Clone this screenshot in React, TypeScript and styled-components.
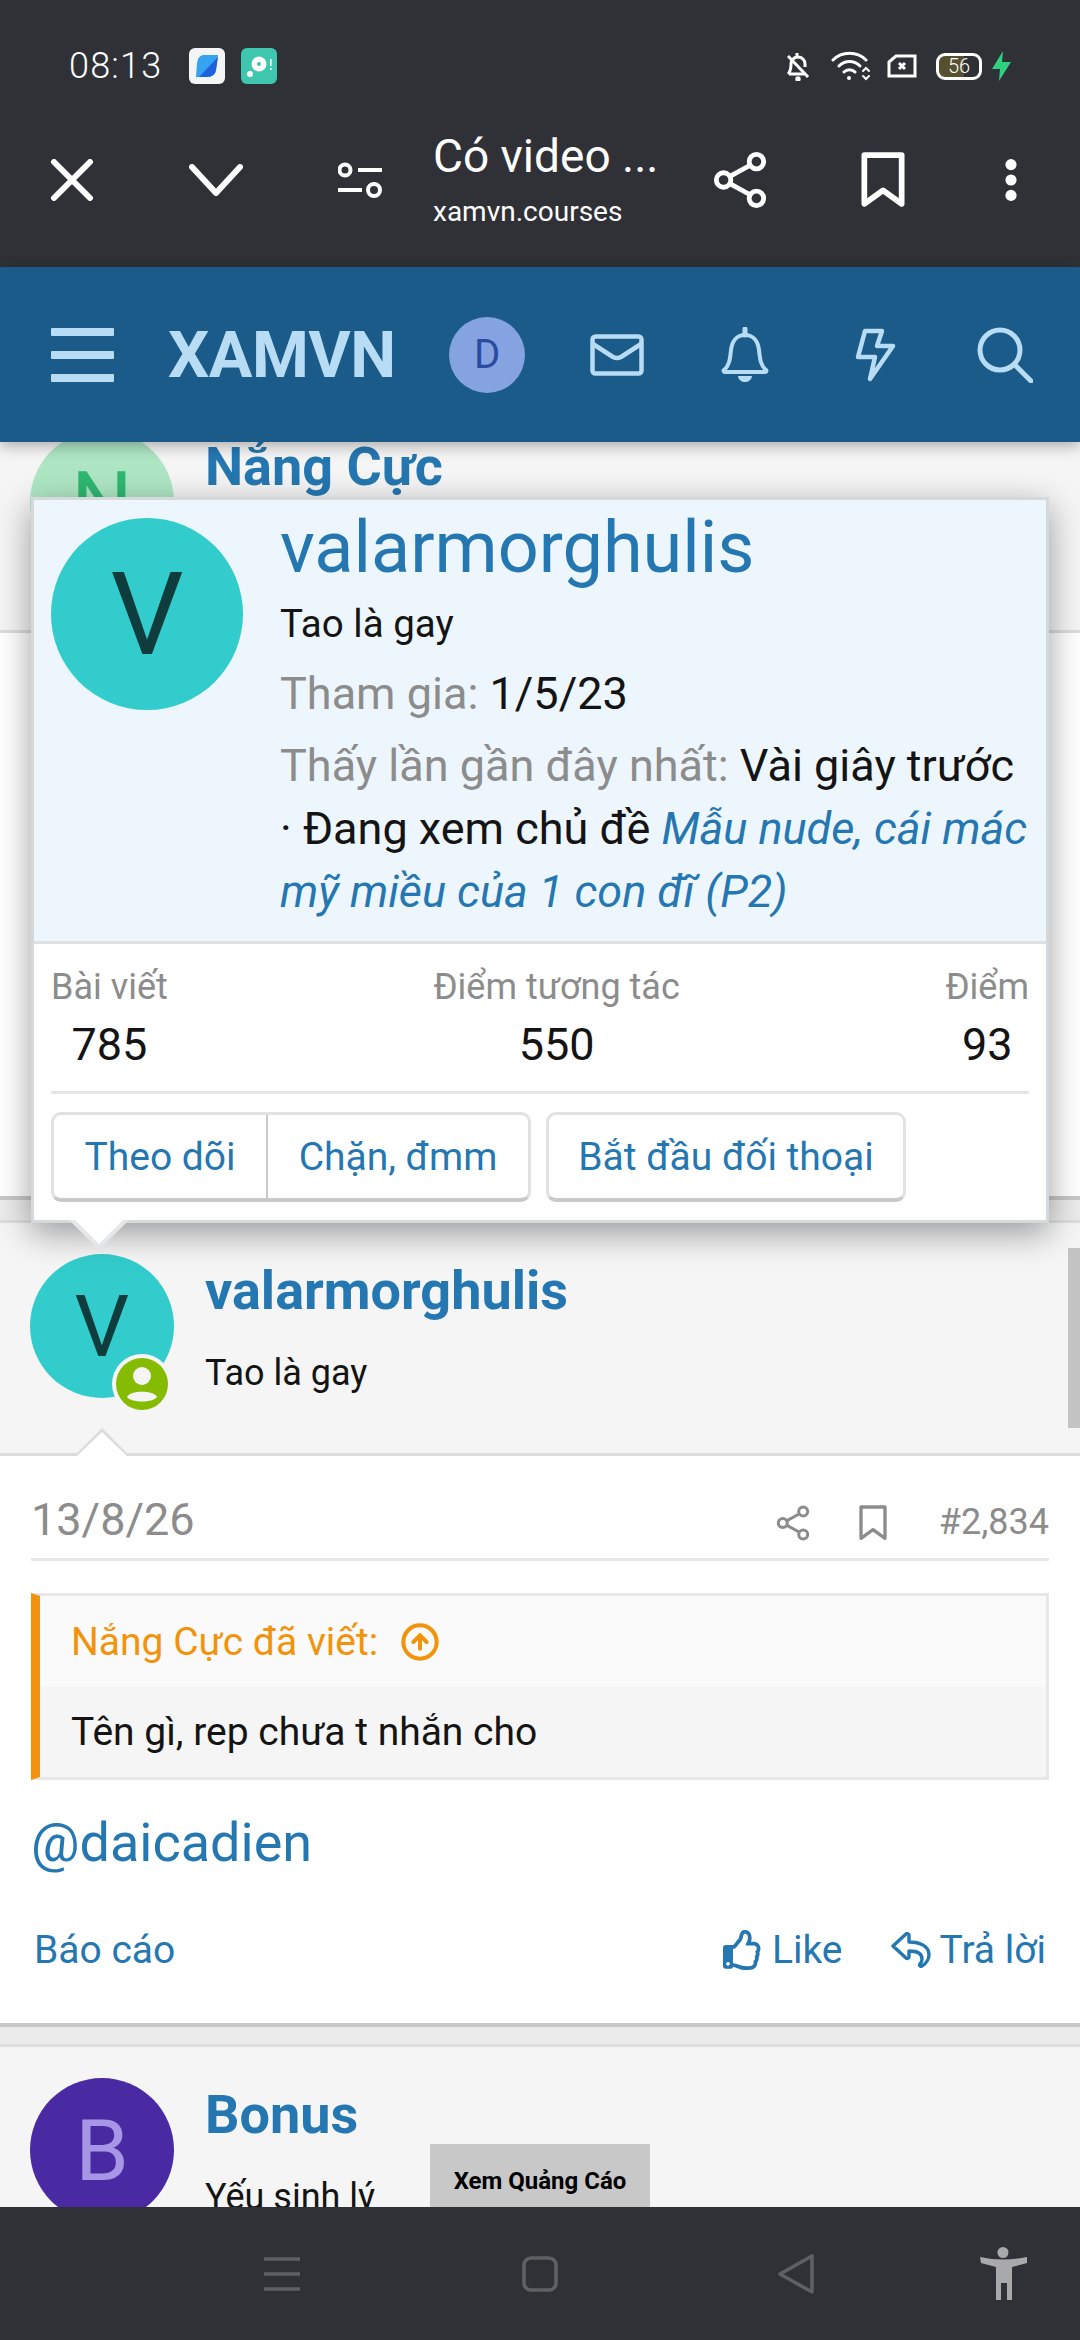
import { CircleArrowUp } from 'lucide-react';
import { FaRegThumbsUp } from 'react-icons/fa';
import styled, { createGlobalStyle } from 'styled-components';

const BLUE = '#2577b1';
const CHROME = '#303136';

const GlobalStyle = createGlobalStyle`
  html, body { margin: 0; padding: 0; background: #fff; }
  * { box-sizing: border-box; }
  body { font-family: Roboto, "Noto Sans", sans-serif; }
`;

const Screen = styled.div`
  width: 1080px;
  height: 2340px;
  display: flex;
  flex-direction: column;
  overflow: hidden;
  position: relative;
`;

// status bar + custom tab toolbar
const TopChrome = styled.div`
  height: 267px;
  background: ${CHROME};
  color: #fff;
  display: flex;
  flex-direction: column;
  flex: none;
`;

const StatusBar = styled.div`
  height: 132px;
  display: flex;
  align-items: center;
  padding: 0 69px 0 69px;
`;

const Clock = styled.span`
  font-size: 36px;
  font-weight: 300;
  letter-spacing: 1.2px;
  width: 120px;
`;

const AppBadge = styled.div<{ $bg: string }>`
  width: 36px;
  height: 36px;
  border-radius: 6px;
  background: ${({ $bg }) => $bg};
  display: flex;
  align-items: center;
  justify-content: center;
  margin-right: 16px;
`;

const StatusIcons = styled.div`
  margin-left: auto;
  display: flex;
  align-items: center;
`;

const BatteryShell = styled.div`
  width: 46px;
  height: 27px;
  border: 3px solid #fff;
  border-radius: 9px;
  font-size: 20px;
  font-weight: 300;
  display: flex;
  align-items: center;
  justify-content: center;
  background: linear-gradient(90deg, #57502f 0 62%, transparent 62%);
  margin-left: 19px;
`;

const Toolbar = styled.div`
  height: 135px;
  padding-bottom: 40px;
  display: flex;
  align-items: center;
  position: relative;
`;

const ToolSlot = styled.div<{ $w: number; $pl?: number }>`
  width: ${({ $w }) => $w}px;
  padding-left: ${({ $pl }) => $pl ?? 0}px;
  display: flex;
  align-items: center;
  flex: none;
`;

const TabTitle = styled.div`
  display: flex;
  flex-direction: column;
  width: 278px;
  flex: none;
  margin-top: 2px;
`;

const TitleLine = styled.span`
  font-size: 46px;
  line-height: 54px;
  font-weight: 400;
`;

const UrlLine = styled.span`
  font-size: 28px;
  line-height: 40px;
  margin-top: 9px;
`;

const SiteHeader = styled.header`
  height: 175px;
  flex: none;
  background: #1a5b89;
  color: #b9dcf5;
  display: flex;
  align-items: center;
  padding-left: 51px;
  position: relative;
  z-index: 2;
  box-shadow: 0 4px 14px rgba(0, 0, 0, 0.3);
`;

const Logo = styled.span`
  font-size: 65px;
  font-weight: 700;
  margin-left: 54px;
  width: 281px;
  letter-spacing: -0.5px;
`;

const UserDot = styled.div`
  width: 76px;
  height: 76px;
  border-radius: 50%;
  background: #85a3e0;
  color: #2b4ba3;
  font-size: 40px;
  display: flex;
  align-items: center;
  justify-content: center;
`;

const HeaderIcon = styled.div<{ $ml: number }>`
  margin-left: ${({ $ml }) => $ml}px;
  display: flex;
`;

const Viewport = styled.main`
  flex: 1;
  min-height: 0;
  position: relative;
  overflow: hidden;
  background: #ebebeb;
`;

const Thread = styled.div`
  margin-top: -43px;
  display: flex;
  flex-direction: column;
`;

const UserBlock = styled.div<{ $h: number }>`
  height: ${({ $h }) => $h}px;
  flex: none;
  background: #f5f5f5;
  border-bottom: 3px solid #dcdcdc;
  padding: 31px 0 0 30px;
  display: flex;
  position: relative;
`;

const UserTail = styled.div`
  position: absolute;
  left: 74px;
  bottom: -3px;
  width: 0;
  height: 0;
  border-left: 28px solid transparent;
  border-right: 28px solid transparent;
  border-bottom: 28px solid #dcdcdc;

  &::after {
    content: '';
    position: absolute;
    left: -25px;
    top: 4px;
    border-left: 25px solid transparent;
    border-right: 25px solid transparent;
    border-bottom: 24px solid #fff;
  }
`;

const Avatar = styled.div<{ $size: number; $bg: string; $fg: string }>`
  width: ${({ $size }) => $size}px;
  height: ${({ $size }) => $size}px;
  border-radius: 50%;
  flex: none;
  background: ${({ $bg }) => $bg};
  color: ${({ $fg }) => $fg};
  font-size: ${({ $size }) => Math.round($size * 0.6)}px;
  display: flex;
  align-items: center;
  justify-content: center;
  position: relative;
`;

const OnlineBadge = styled.div`
  position: absolute;
  left: 82px;
  top: 100px;
  width: 60px;
  height: 60px;
  border-radius: 50%;
  background: #f5f5f5;
  display: flex;
  align-items: center;
  justify-content: center;
`;

const UserInfo = styled.div`
  margin-left: 31px;
  display: flex;
  flex-direction: column;
`;

const UserName = styled.span`
  font-size: 54px;
  line-height: 56px;
  font-weight: 700;
  color: ${BLUE};
  margin-top: 9px;
`;

const UserTitle = styled.span`
  font-size: 36px;
  line-height: 40px;
  color: #141414;
  margin-top: 34px;
`;

const PostBody = styled.div<{ $h: number }>`
  height: ${({ $h }) => $h}px;
  flex: none;
  background: #fff;
  border-bottom: 4px solid #c8c8c8;
  padding: 0 31px;
  display: flex;
  flex-direction: column;
`;

const PostGap = styled.div<{ $h: number }>`
  height: ${({ $h }) => $h}px;
  flex: none;
  background: #ebebeb;
  border-bottom: 3px solid #dedede;
`;

const PostMeta = styled.div`
  height: 105px;
  flex: none;
  border-bottom: 3px solid #e7e7e7;
  display: flex;
  align-items: center;
  color: #8c8c8c;
  padding-top: 24px;
`;

const PostDate = styled.span`
  font-size: 45px;
  font-weight: 400;
`;

const PostNumber = styled.span`
  font-size: 36px;
  margin-left: 52px;
  margin-top: 6px;
`;

const MetaIcons = styled.div`
  margin-left: auto;
  display: flex;
  align-items: center;
  gap: 48px;
  margin-top: 8px;
`;

const Quote = styled.blockquote`
  margin: 32px 0 0;
  height: 187px;
  flex: none;
  border: 3px solid #e7e7e7;
  border-left: 9px solid #f2930d;
  display: flex;
  flex-direction: column;
`;

const QuoteHead = styled.div`
  height: 91px;
  background: #fafafa;
  color: #f2930d;
  font-size: 39px;
  padding-left: 31px;
  display: flex;
  align-items: center;
  gap: 22px;
`;

const QuoteText = styled.div`
  flex: 1;
  background: #f5f5f5;
  color: #141414;
  font-size: 39px;
  padding-left: 31px;
  display: flex;
  align-items: center;
`;

const Mention = styled.div`
  font-size: 54px;
  line-height: 64px;
  color: ${BLUE};
  margin-top: 31px;
`;

const PostActions = styled.div`
  display: flex;
  align-items: center;
  margin-top: 53px;
  padding: 0 3px;
  color: ${BLUE};
  font-size: 39px;
  line-height: 44px;
`;

const ActionLink = styled.span<{ $ml?: string }>`
  display: flex;
  align-items: center;
  gap: 9px;
  margin-left: ${({ $ml }) => $ml ?? '0'};
`;

const AdBox = styled.div`
  position: absolute;
  left: 430px;
  top: 1702px;
  width: 220px;
  height: 90px;
  background: #c8c8c8;
  color: #000;
  font-size: 24px;
  font-weight: 700;
  text-align: center;
  padding-top: 21px;
  line-height: 32px;
`;

const ScrollThumb = styled.div`
  position: absolute;
  right: 0;
  top: 806px;
  width: 12px;
  height: 180px;
  background: #c4c4c4;
`;

// member tooltip card
const MemberCard = styled.div`
  position: absolute;
  left: 31px;
  top: 55px;
  width: 1018px;
  height: 726px;
  background: #fff;
  border: 3px solid #d6d9dc;
  box-shadow: 0 10px 32px rgba(0, 0, 0, 0.38);
  display: flex;
  flex-direction: column;
`;

const CardTail = styled.div`
  position: absolute;
  left: 35px;
  bottom: -30px;
  width: 0;
  height: 0;
  border-left: 30px solid transparent;
  border-right: 30px solid transparent;
  border-top: 30px solid #e4e6e8;

  &::after {
    content: '';
    position: absolute;
    left: -27px;
    top: -33px;
    border-left: 27px solid transparent;
    border-right: 27px solid transparent;
    border-top: 27px solid #fff;
  }
`;

const CardTop = styled.div`
  height: 444px;
  flex: none;
  background: #edf6fd;
  border-bottom: 3px solid #dde1e4;
  padding: 18px 0 0 17px;
  display: flex;
`;

const CardInfo = styled.div`
  margin-left: 37px;
  display: flex;
  flex-direction: column;
  width: 755px;
`;

const CardName = styled.div`
  font-size: 72px;
  line-height: 70px;
  color: ${BLUE};
  margin-top: -5px;
`;

const CardTagline = styled.div`
  font-size: 38.5px;
  line-height: 44px;
  color: #141414;
  margin-top: 19px;
`;

const CardLine = styled.div<{ $mt: number }>`
  font-size: 45px;
  line-height: 63px;
  color: #141414;
  margin-top: ${({ $mt }) => $mt}px;
`;

const Muted = styled.span`
  color: #8c8c8c;
`;

const ThreadLink = styled.em`
  color: ${BLUE};
  font-style: italic;
`;

const CardBottom = styled.div`
  flex: 1;
  padding: 0 17px;
  display: flex;
  flex-direction: column;
`;

const StatsRow = styled.div`
  height: 150px;
  flex: none;
  display: flex;
  justify-content: space-between;
  border-bottom: 3px solid #e4e4e4;
  padding-top: 23px;
`;

const Stat = styled.div`
  display: flex;
  flex-direction: column;
  align-items: center;
`;

const StatLabel = styled.span`
  font-size: 36px;
  line-height: 40px;
  color: #8c8c8c;
`;

const StatValue = styled.span`
  font-size: 45px;
  line-height: 50px;
  color: #141414;
  margin-top: 13px;
`;

const ButtonRow = styled.div`
  display: flex;
  gap: 15px;
  margin-top: 18px;
`;

const ButtonGroup = styled.div`
  display: flex;
  height: 90px;
  background: #fff;
  border: 3px solid #e2e2e2;
  border-bottom: 4px solid #c9c9c9;
  border-radius: 10px;
  overflow: hidden;
`;

const CardButton = styled.span<{ $w: number; $split?: boolean }>`
  width: ${({ $w }) => $w}px;
  font-size: 39px;
  color: ${BLUE};
  display: flex;
  align-items: center;
  justify-content: center;
  border-right: ${({ $split }) => ($split ? '2px solid #c9c9c9' : 'none')};
`;

const BottomNav = styled.nav`
  height: 133px;
  flex: none;
  background: ${CHROME};
  position: relative;
  z-index: 2;
  display: flex;
  align-items: center;
  padding-left: 264px;
`;

const NavSlot = styled.div<{ $ml: number }>`
  margin-left: ${({ $ml }) => $ml}px;
  display: flex;
`;

const ShareGlyph = ({ size, color, sw }: { size: number; color: string; sw: number }) => (
  <svg width={size} height={size} viewBox="0 0 56 60" fill="none" stroke={color} strokeWidth={sw}>
    <circle cx="45" cy="11" r="7.5" />
    <circle cx="11" cy="30" r="7.5" />
    <circle cx="45" cy="49" r="7.5" />
    <path d="M18 26 38 15M18 34l20 11" />
  </svg>
);

const BookmarkGlyph = ({ w, h, color, sw }: { w: number; h: number; color: string; sw: number }) => (
  <svg width={w} height={h} viewBox="0 0 42 54" fill="none" stroke={color} strokeWidth={sw} strokeLinejoin="round">
    <path d="M3 3h36v47L21 37 3 50z" />
  </svg>
);

const HeaderColor = '#b9dcf5';

export default function App() {
  return (
    <Screen>
      <GlobalStyle />
      <TopChrome>
        <StatusBar>
          <Clock>08:13</Clock>
          <AppBadge $bg="#f4f5f7">
            <svg width="28" height="28" viewBox="0 0 28 28">
              <path d="M10 3h15l-2 15q-1 7-9 7H3l1-14q1-7 6-8z" fill="#36a3f2" />
              <path d="M25 5l-2 13q-1 7-9 7H6z" fill="#1f62e0" />
            </svg>
          </AppBadge>
          <AppBadge $bg="#3fc6ae">
            <svg width="30" height="30" viewBox="0 0 30 30" fill="#fff">
              <circle cx="15" cy="13" r="7.5" />
              <circle cx="15" cy="13" r="2" fill="#3fc6ae" />
              <circle cx="6" cy="23" r="3" />
              <rect x="26" y="8" width="1.6" height="7" />
              <rect x="26" y="17" width="1.6" height="2" />
            </svg>
          </AppBadge>
          <StatusIcons>
            <svg width="26" height="30" viewBox="0 0 26 30" fill="none" stroke="#fff" strokeWidth="3">
              <path d="M3 23c3-3 3-6 3-10 0-4 3-7 7-7s7 3 7 7v3M4 23h15M12 2v3" />
              <path d="M3 5l20 21" />
              <circle cx="13" cy="28" r="1.2" fill="#fff" />
            </svg>
            <svg width="40" height="30" viewBox="0 0 40 30" fill="none" stroke="#fff" strokeWidth="3" style={{ marginLeft: 20 }} strokeLinecap="round">
              <path d="M2 9c9-9 24-9 33 0M8 15c6-6 15-6 21 0M13 21c3-3 8-3 11 0" />
              <circle cx="18" cy="27" r="2" fill="#fff" stroke="none" />
              <path d="M32 20l3-3 3 3M32 25l3 3 3-3" strokeWidth="2" />
            </svg>
            <svg width="30" height="24" viewBox="0 0 30 24" fill="none" stroke="#fff" strokeWidth="3" style={{ marginLeft: 16 }}>
              <path d="M9 2h19v20H2V8z" />
              <path d="M12 9l6 6M18 9l-6 6" />
            </svg>
            <BatteryShell>56</BatteryShell>
            <svg width="19" height="30" viewBox="0 0 19 30" fill="#2fd07f" style={{ marginLeft: 10 }}>
              <path d="M11 0 0 18h8l-1 12L19 11h-9z" />
            </svg>
          </StatusIcons>
        </StatusBar>
        <Toolbar>
          <ToolSlot $w={189} $pl={50}>
            <svg width="44" height="42" viewBox="0 0 44 42" stroke="#fff" strokeWidth="6" strokeLinecap="round">
              <path d="M4 3l36 36M40 3 4 39" />
            </svg>
          </ToolSlot>
          <ToolSlot $w={149}>
            <svg width="54" height="32" viewBox="0 0 54 32" fill="none" stroke="#fff" strokeWidth="6" strokeLinecap="round" strokeLinejoin="round">
              <path d="M3 3l24 26L51 3" />
            </svg>
          </ToolSlot>
          <ToolSlot $w={95}>
            <svg width="44" height="36" viewBox="0 0 44 36" fill="none" stroke="#fff" strokeWidth="4">
              <circle cx="7" cy="8" r="5.5" />
              <path d="M20 8h24M0 28h24" />
              <circle cx="36" cy="28" r="6" />
            </svg>
          </ToolSlot>
          <TabTitle>
            <TitleLine>Có video ...</TitleLine>
            <UrlLine>xamvn.courses</UrlLine>
          </TabTitle>
          <ToolSlot $w={150}>
            <ShareGlyph size={58} color="#fff" sw={5} />
          </ToolSlot>
          <ToolSlot $w={144}>
            <BookmarkGlyph w={44} h={56} color="#fff" sw={5.5} />
          </ToolSlot>
          <ToolSlot $w={12}>
            <svg width="14" height="50" viewBox="0 0 14 50" fill="#fff">
              <circle cx="7" cy="7" r="6.5" />
              <circle cx="7" cy="25" r="6.5" />
              <circle cx="7" cy="43" r="6.5" />
            </svg>
          </ToolSlot>
        </Toolbar>
      </TopChrome>

      <SiteHeader>
        <svg width="63" height="54" viewBox="0 0 63 54" fill={HeaderColor}>
          <rect width="63" height="8" y="0" rx="1" />
          <rect width="63" height="8" y="23" rx="1" />
          <rect width="63" height="8" y="46" rx="1" />
        </svg>
        <Logo>XAMVN</Logo>
        <UserDot>D</UserDot>
        <HeaderIcon $ml={65}>
          <svg width="54" height="42" viewBox="0 0 54 42" fill="none" stroke={HeaderColor} strokeWidth="4.5" strokeLinejoin="round">
            <rect x="2.5" y="2.5" width="49" height="37" rx="3" />
            <path d="M3 10l20 13q4 2 8 0L51 10" />
          </svg>
        </HeaderIcon>
        <HeaderIcon $ml={77}>
          <svg width="48" height="56" viewBox="0 0 48 56" fill="none" stroke={HeaderColor} strokeWidth="4" strokeLinejoin="round">
            <path d="M3 43c5-4 6-10 7-20 1-9 6-15 14-15s13 6 14 15c1 10 2 16 7 20 1 1 0 2-1 2H4c-1 0-2-1-1-2z" />
            <path d="M24 2v6" strokeWidth="5" strokeLinecap="round" />
            <path d="M17 49c1 8 13 8 14 0z" fill={HeaderColor} stroke="none" />
          </svg>
        </HeaderIcon>
        <HeaderIcon $ml={85}>
          <svg width="42" height="56" viewBox="0 0 42 56" fill="none" stroke={HeaderColor} strokeWidth="4.5" strokeLinejoin="round">
            <path d="M11 4h17l-5 15h16L16 52l5-22H4z" />
          </svg>
        </HeaderIcon>
        <HeaderIcon $ml={81}>
          <svg width="56" height="56" viewBox="0 0 56 56" fill="none" stroke={HeaderColor} strokeWidth="5" strokeLinecap="round">
            <circle cx="23" cy="23" r="20" />
            <path d="M38 38l16 16" />
          </svg>
        </HeaderIcon>
      </SiteHeader>

      <Viewport>
        <Thread>
          <UserBlock $h={234}>
            <Avatar $size={144} $bg="#aee6c4" $fg="#2eb872">N</Avatar>
            <UserInfo>
              <UserName>Nắng Cực</UserName>
            </UserInfo>
          </UserBlock>
          <PostBody $h={567} />
          <PostGap $h={23} />
          <UserBlock $h={233}>
            <Avatar $size={144} $bg="#33cccc" $fg="#0f3d3d">
              V
              <OnlineBadge>
                <svg width="52" height="52" viewBox="0 0 52 52">
                  <circle cx="26" cy="26" r="26" fill="#85bb00" />
                  <circle cx="26" cy="18" r="9" fill="#f5f5f5" />
                  <path d="M11 39c3-7 27-7 30 0-4 6-26 6-30 0z" fill="#f5f5f5" />
                </svg>
              </OnlineBadge>
            </Avatar>
            <UserInfo>
              <UserName>valarmorghulis</UserName>
              <UserTitle>Tao là gay</UserTitle>
            </UserInfo>
            <UserTail />
          </UserBlock>
          <PostBody $h={571}>
            <PostMeta>
              <PostDate>13/8/26</PostDate>
              <MetaIcons>
                <ShareGlyph size={36} color="#8c8c8c" sw={5} />
                <BookmarkGlyph w={28} h={36} color="#8c8c8c" sw={5} />
              </MetaIcons>
              <PostNumber>#2,834</PostNumber>
            </PostMeta>
            <Quote>
              <QuoteHead>
                Nắng Cực đã viết:
                <CircleArrowUp size={40} strokeWidth={2.4} />
              </QuoteHead>
              <QuoteText>Tên gì, rep chưa t nhắn cho</QuoteText>
            </Quote>
            <Mention>@daicadien</Mention>
            <PostActions>
              <span>Báo cáo</span>
              <ActionLink $ml="auto">
                <FaRegThumbsUp size={40} />
                Like
              </ActionLink>
              <ActionLink $ml="48px">
                <svg width="40" height="36" viewBox="0 0 40 36" fill="none" stroke={BLUE} strokeWidth="3.4" strokeLinejoin="round">
                  <path d="M15 2 2 14l13 12c1 1 3 0 3-1v-6c8 0 13 2 13 8 0 2-1 4-2 5-1 1 0 3 2 2 5-3 7-8 7-11 0-9-9-13-20-13V3c0-1-2-2-3-1z" />
                </svg>
                Trả lời
              </ActionLink>
            </PostActions>
          </PostBody>
          <PostGap $h={20} />
          <UserBlock $h={300}>
            <Avatar $size={144} $bg="#4a2aa3" $fg="#a796e6">B</Avatar>
            <UserInfo>
              <UserName>Bonus</UserName>
              <UserTitle>Yếu sinh lý</UserTitle>
            </UserInfo>
          </UserBlock>
        </Thread>
        <AdBox>Xem Quảng Cáo</AdBox>
        <ScrollThumb />
        <MemberCard>
          <CardTop>
            <Avatar $size={192} $bg="#33cccc" $fg="#0f3d3d">V</Avatar>
            <CardInfo>
              <CardName>valarmorghulis</CardName>
              <CardTagline>Tao là gay</CardTagline>
              <CardLine $mt={16}>
                <Muted>Tham gia:</Muted> 1/5/23
              </CardLine>
              <CardLine $mt={9}>
                <Muted>Thấy lần gần đây nhất:</Muted> Vài giây trước · Đang xem chủ đề{' '}
                <ThreadLink>Mẫu nude, cái mác mỹ miều của 1 con đĩ (P2)</ThreadLink>
              </CardLine>
            </CardInfo>
          </CardTop>
          <CardBottom>
            <StatsRow>
              <Stat>
                <StatLabel>Bài viết</StatLabel>
                <StatValue>785</StatValue>
              </Stat>
              <Stat>
                <StatLabel>Điểm tương tác</StatLabel>
                <StatValue>550</StatValue>
              </Stat>
              <Stat>
                <StatLabel>Điểm</StatLabel>
                <StatValue>93</StatValue>
              </Stat>
            </StatsRow>
            <ButtonRow>
              <ButtonGroup>
                <CardButton $w={214} $split>Theo dõi</CardButton>
                <CardButton $w={260}>Chặn, đmm</CardButton>
              </ButtonGroup>
              <ButtonGroup>
                <CardButton $w={354}>Bắt đầu đối thoại</CardButton>
              </ButtonGroup>
            </ButtonRow>
          </CardBottom>
          <CardTail />
        </MemberCard>
      </Viewport>

      <BottomNav>
        <svg width="36" height="34" viewBox="0 0 36 34" stroke="#5f6064" strokeWidth="3.5">
          <path d="M0 2h36M0 17h36M0 32h36" />
        </svg>
        <NavSlot $ml={222}>
          <svg width="36" height="36" viewBox="0 0 36 36" fill="none" stroke="#5f6064" strokeWidth="3.5">
            <rect x="2" y="2" width="32" height="32" rx="7" />
          </svg>
        </NavSlot>
        <NavSlot $ml={220}>
          <svg width="36" height="40" viewBox="0 0 36 40" fill="none" stroke="#5f6064" strokeWidth="3.5" strokeLinejoin="round">
            <path d="M34 2v36L2 20z" />
          </svg>
        </NavSlot>
        <NavSlot $ml={166}>
          <svg width="47" height="54" viewBox="0 0 47 54" fill="#a9a9ab">
            <circle cx="23" cy="5.5" r="5.5" />
            <path d="M0 10Q23 15 47 10L47 16 32 20V53H27V36H21V53H16V20L1 16z" />
          </svg>
        </NavSlot>
      </BottomNav>
    </Screen>
  );
}
